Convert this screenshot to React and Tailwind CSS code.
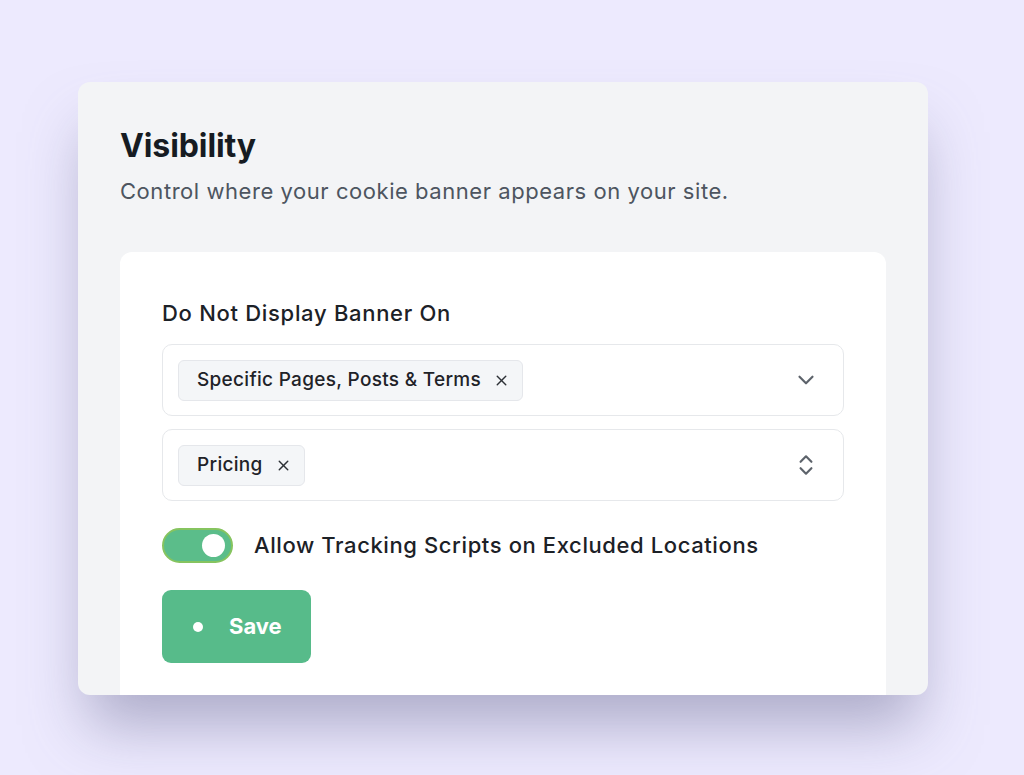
import { ChevronDown, ChevronsUpDown, X } from "lucide-react";

const Chip = ({ label }) => (
  <div className="flex items-center gap-3 h-[41px] pl-[18px] pr-[12px] rounded-md border border-[#e5e7eb] bg-[#f4f6f8]">
    <span className="text-[19px] font-medium tracking-[0.3px] text-[#1f2328]">{label}</span>
    <X size={17} strokeWidth={2} className="text-[#2d3136]" />
  </div>
);

const SelectBox = ({ label, icon }) => (
  <div className="flex items-center justify-between h-[72px] pl-[15px] pr-[24px] rounded-[10px] border border-[#e6e8eb] bg-white">
    <Chip label={label} />
    {icon}
  </div>
);

const App = () => {
  return (
    <div
      className="min-h-screen w-full bg-[#edeafe] pt-[82px] pl-[78px]"
      style={{ fontFamily: "Inter, 'Noto Sans', sans-serif" }}
    >
      <div className="w-[850px] h-[613px] overflow-hidden rounded-[12px] bg-[#f3f4f6] pt-[44px] px-[42px] shadow-[0_40px_60px_-10px_rgba(110,110,150,0.5)]">
        <h1 className="text-[32px] leading-[40px] font-bold text-[#161b22] tracking-[-0.1px]">
          Visibility
        </h1>
        <p className="mt-[10px] text-[22px] leading-[30px] tracking-[0.55px] text-[#4d5560]">
          Control where your cookie banner appears on your site.
        </p>

        <div className="mt-[46px] h-[500px] rounded-t-[12px] bg-white px-[42px] pt-[47px]">
          <div className="text-[22px] leading-[28px] font-medium tracking-[0.7px] text-[#1c2127]">
            Do Not Display Banner On
          </div>
          <div className="mt-[17px] flex flex-col gap-[13px]">
            <SelectBox
              label="Specific Pages, Posts & Terms"
              icon={<ChevronDown size={26} strokeWidth={2} className="text-[#5d636b]" />}
            />
            <SelectBox
              label="Pricing"
              icon={<ChevronsUpDown size={26} strokeWidth={2} className="text-[#5d636b]" />}
            />
          </div>

          <div className="mt-[27px] flex items-center gap-[21px]">
            <div className="relative h-[35px] w-[71px] rounded-full border-2 border-[#86c45f] bg-[#5bbd8a]">
              <div className="absolute right-[6px] top-[4px] h-[23px] w-[23px] rounded-full bg-white" />
            </div>
            <span className="text-[22px] font-medium tracking-[0.6px] text-[#1c2127]">
              Allow Tracking Scripts on Excluded Locations
            </span>
          </div>

          <button className="mt-[27px] flex items-center gap-[26px] h-[73px] w-[149px] rounded-[9px] bg-[#57bb8a] pl-[31px]">
            <span className="h-[10px] w-[10px] rounded-full bg-white" />
            <span className="text-[22px] font-bold text-white">Save</span>
          </button>
        </div>
      </div>
    </div>
  );
};

export default App;
